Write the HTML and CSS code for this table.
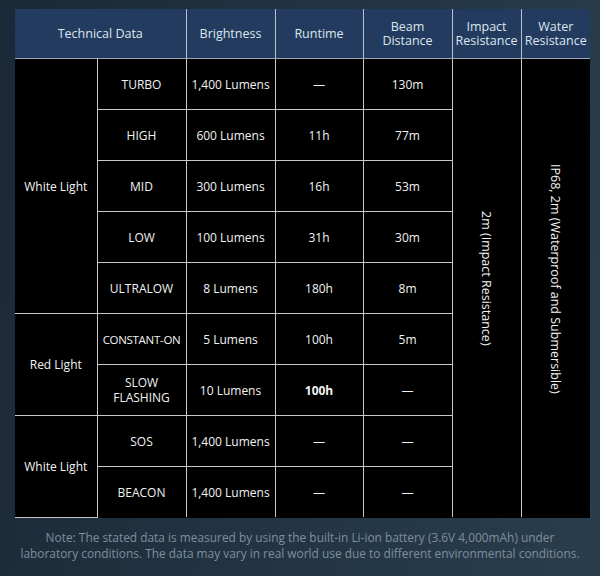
FILE: index.html
```html
<!DOCTYPE html>
<html>
<head>
<meta charset="utf-8">
<link rel="stylesheet" href="styles.css">
</head>
<body>
<div class="page">
  <table class="spec">
    <colgroup>
      <col class="c1"><col class="c2"><col class="c3"><col class="c4"><col class="c5"><col class="c6"><col class="c7">
    </colgroup>
    <thead>
      <tr>
        <th colspan="2">Technical Data</th>
        <th>Brightness</th>
        <th>Runtime</th>
        <th>Beam<br>Distance</th>
        <th>Impact<br>Resistance</th>
        <th>Water<br>Resistance</th>
      </tr>
    </thead>
    <tbody>
      <tr>
        <td rowspan="5">White Light</td>
        <td>TURBO</td>
        <td>1,400 Lumens</td>
        <td>—</td>
        <td>130m</td>
        <td rowspan="9" class="vert"><span>2m (Impact Resistance)</span></td>
        <td rowspan="9" class="vert"><span>IP68, 2m (Waterproof and Submersible)</span></td>
      </tr>
      <tr><td>HIGH</td><td>600 Lumens</td><td>11h</td><td>77m</td></tr>
      <tr><td>MID</td><td>300 Lumens</td><td>16h</td><td>53m</td></tr>
      <tr><td>LOW</td><td>100 Lumens</td><td>31h</td><td>30m</td></tr>
      <tr><td>ULTRALOW</td><td>8 Lumens</td><td>180h</td><td>8m</td></tr>
      <tr>
        <td rowspan="2">Red Light</td>
        <td class="tight">CONSTANT-ON</td><td>5 Lumens</td><td>100h</td><td>5m</td>
      </tr>
      <tr><td>SLOW<br>FLASHING</td><td>10 Lumens</td><td class="bold">100h</td><td>—</td></tr>
      <tr>
        <td rowspan="2">White Light</td>
        <td>SOS</td><td>1,400 Lumens</td><td>—</td><td>—</td>
      </tr>
      <tr><td>BEACON</td><td>1,400 Lumens</td><td>—</td><td>—</td></tr>
    </tbody>
  </table>
  <p class="note">Note: The stated data is measured by using the built-in Li-ion battery (3.6V 4,000mAh) under<br>laboratory conditions. The data may vary in real world use due to different environmental conditions.</p>
</div>
</body>
</html>
```
FILE: styles.css
```css
html, body {
  margin: 0;
  padding: 0;
}
body {
  width: 600px;
  height: 576px;
  overflow: hidden;
  background: linear-gradient(100deg, #1a2937 0%, #223444 50%, #2a3d4d 100%);
  font-family: "Open Sans", "Liberation Sans", sans-serif;
}
.page {
  padding: 9px 10px 0 15px;
}
.spec {
  border-collapse: collapse;
  table-layout: fixed;
  width: 575px;
  background: #000;
  color: #f2f2f2;
  font-size: 12px;
  text-align: center;
}
.c1 { width: 82px; }
.c2 { width: 89px; }
.c3 { width: 89px; }
.c4 { width: 88px; }
.c5 { width: 89px; }
.c6 { width: 69px; }
.c7 { width: 69px; }
.spec th {
  background: #223b5f;
  color: #dfe5ee;
  font-weight: normal;
  font-size: 12.5px;
  height: 49px;
  padding: 0;
  line-height: 14px;
  border-left: 1px solid #b9c1cc;
  border-bottom: 1px solid #9aa6b6;
}
.spec th:first-child { border-left: none; }
.spec td {
  height: 50px;
  padding: 0;
  line-height: 15px;
  border: 1px solid #c8c8c8;
}
.spec tr td:first-child { border-left: none; }
.spec tbody tr:first-child td { border-top: none; }
.spec tbody tr:last-child td { border-bottom: none; }
.spec td.vert { border-bottom: none; }
.spec td.vert:last-child { border-right: none; }
.spec td.tight { letter-spacing: -0.3px; font-size: 11.5px; }
.bold { font-weight: bold; }
.vert span {
  writing-mode: vertical-rl;
  display: inline-block;
  font-size: 12.5px;
  margin-top: -16px;
}
.note {
  margin: 11px 0 0 -15px;
  width: 600px;
  text-align: center;
  color: #7f8e9c;
  font-size: 11.9px;
  line-height: 16px;
}
```
